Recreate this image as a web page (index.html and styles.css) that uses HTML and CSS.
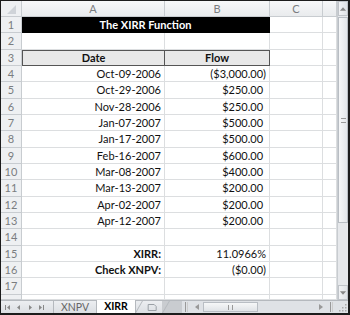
FILE: index.html
```html
<!DOCTYPE html>
<html>
<head>
<meta charset="utf-8">
<link rel="stylesheet" href="styles.css">
</head>
<body>
<div class="frame">
  <div class="main">
    <div class="sheet">
      <div class="corner"><svg width="20" height="15" viewBox="0 0 20 15"><polygon points="15,4 15,13 6,13" fill="#cfd3d8"/></svg></div>
      <div class="ch">A</div><div class="ch">B</div><div class="ch">C</div><div class="ch"></div>

      <div class="rh">1</div><div class="title">The XIRR Function</div><div class="c"></div><div class="c"></div>
      <div class="rh">2</div><div class="c"></div><div class="c"></div><div class="c"></div><div class="c"></div>
      <div class="rh">3</div><div class="hd hd-a">Date</div><div class="hd hd-b">Flow</div><div class="c"></div><div class="c"></div>
      <div class="rh">4</div><div class="c r">Oct-09-2006</div><div class="c r">($3,000.00)</div><div class="c"></div><div class="c"></div>
      <div class="rh">5</div><div class="c r">Oct-29-2006</div><div class="c r">$250.00<span class="p">)</span></div><div class="c"></div><div class="c"></div>
      <div class="rh">6</div><div class="c r">Nov-28-2006</div><div class="c r">$250.00<span class="p">)</span></div><div class="c"></div><div class="c"></div>
      <div class="rh">7</div><div class="c r">Jan-07-2007</div><div class="c r">$500.00<span class="p">)</span></div><div class="c"></div><div class="c"></div>
      <div class="rh">8</div><div class="c r">Jan-17-2007</div><div class="c r">$500.00<span class="p">)</span></div><div class="c"></div><div class="c"></div>
      <div class="rh">9</div><div class="c r">Feb-16-2007</div><div class="c r">$600.00<span class="p">)</span></div><div class="c"></div><div class="c"></div>
      <div class="rh">10</div><div class="c r">Mar-08-2007</div><div class="c r">$400.00<span class="p">)</span></div><div class="c"></div><div class="c"></div>
      <div class="rh">11</div><div class="c r">Mar-13-2007</div><div class="c r">$200.00<span class="p">)</span></div><div class="c"></div><div class="c"></div>
      <div class="rh">12</div><div class="c r">Apr-02-2007</div><div class="c r">$200.00<span class="p">)</span></div><div class="c"></div><div class="c"></div>
      <div class="rh">13</div><div class="c r">Apr-12-2007</div><div class="c r">$200.00<span class="p">)</span></div><div class="c"></div><div class="c"></div>
      <div class="rh">14</div><div class="c"></div><div class="c"></div><div class="c"></div><div class="c"></div>
      <div class="rh">15</div><div class="c r b">XIRR:</div><div class="c r">11.0966%</div><div class="c"></div><div class="c"></div>
      <div class="rh">16</div><div class="c r b">Check XNPV:</div><div class="c r">($0.00)</div><div class="c"></div><div class="c"></div>
      <div class="rh">17</div><div class="c"></div><div class="c"></div><div class="c"></div><div class="c"></div>
      <div class="rh">18</div><div class="c"></div><div class="c"></div><div class="c"></div><div class="c"></div>
    </div>
    <div class="vscroll">
      <div class="sbtn"><svg width="9" height="6" viewBox="0 0 9 6"><polygon points="1,5 8,5 4.5,1" fill="#888"/></svg></div>
      <div class="vthumb"><span class="grip"></span></div>
      <div class="vtrack"></div>
      <div class="sbtn"><svg width="9" height="6" viewBox="0 0 9 6"><polygon points="1,1 8,1 4.5,5" fill="#888"/></svg></div>
    </div>
  </div>
  <div class="tabbar">
    <div class="nav">
      <svg width="46" height="9" viewBox="0 0 46 9">
        <rect x="2" y="2" width="1" height="5" fill="#888"/><polygon points="7,2 7,7 4,4.5" fill="#888"/>
        <polygon points="17,2 17,7 14,4.5" fill="#888"/>
        <polygon points="26,2 26,7 29,4.5" fill="#888"/>
        <polygon points="36,2 36,7 39,4.5" fill="#888"/><rect x="40" y="2" width="1" height="5" fill="#888"/>
      </svg>
    </div>
    <div class="tab">XNPV</div>
    <div class="tab active">XIRR</div>
    <div class="tab newtab"><svg width="12" height="9" viewBox="0 0 12 9"><path d="M2 1.5h6l2 2v4H2z" fill="none" stroke="#9aa0a6"/></svg></div>
    <div class="hfill"></div>
    <div class="hscroll">
      <span class="split"></span>
      <svg class="arr" width="6" height="8" viewBox="0 0 6 8"><polygon points="5,1 5,7 1,4" fill="#999"/></svg>
      <div class="hthumb"><span class="hgrip"></span></div>
      <div class="htrack"></div>
      <svg class="arr" width="6" height="8" viewBox="0 0 6 8"><polygon points="1,1 1,7 5,4" fill="#999"/></svg>
      <span class="split"></span>
      <svg class="resize" width="10" height="10" viewBox="0 0 10 10"><g fill="#aaa"><rect x="7" y="2" width="1.5" height="1.5"/><rect x="4" y="5" width="1.5" height="1.5"/><rect x="7" y="5" width="1.5" height="1.5"/><rect x="1" y="8" width="1.5" height="1.5"/><rect x="4" y="8" width="1.5" height="1.5"/><rect x="7" y="8" width="1.5" height="1.5"/></g></svg>
    </div>
  </div>
</div>
</body>
</html>
```

FILE: styles.css
```css
* { box-sizing: border-box; }
body {
  margin: 0;
  background: #fff;
  font-family: Lato, "Open Sans", "Liberation Sans", sans-serif;
  font-size: 11px;
  color: #111;
}
.frame {
  width: 350px;
  height: 315px;
  border: 1px solid #1c1c1c;
  border-right-width: 2px;
  border-bottom-width: 2px;
  display: flex;
  flex-direction: column;
  overflow: hidden;
}
.main {
  display: flex;
  height: 299px;
}
.sheet {
  width: 336px;
  display: grid;
  grid-template-columns: 21px 143px 105px 53px 14px;
  grid-template-rows: 16px repeat(17, 16.33px) 1fr;
  overflow: hidden;
}
.sheet > div {
  border-right: 1px solid #dcdee0;
  border-bottom: 1px solid #dcdee0;
  white-space: nowrap;
  overflow: hidden;
}
.corner {
  background: #eef0f2;
  border-color: #c8ccd0 !important;
}
.corner svg { display: block; }
.ch {
  background: linear-gradient(#f7f8f9, #e9ebed);
  border-color: #c8ccd0 !important;
  color: #7a7d80;
  text-align: center;
  font-size: 11px;
  line-height: 15px;
}
.rh {
  background: #eef0f2;
  border-color: #c8ccd0 !important;
  color: #7a7d80;
  text-align: center;
  font-size: 11px;
  line-height: 15px;
}
.c {
  line-height: 15px;
  padding: 0 3px;
}
.r { text-align: right; }
.b { font-weight: bold; }
.p { visibility: hidden; }
.title {
  grid-column: span 2;
  background: #000;
  color: #fff;
  font-weight: bold;
  text-align: center;
  line-height: 15px;
  border-right-color: #000 !important;
  border-bottom-color: #000 !important;
}
.hd {
  background: #e8e8e8;
  font-weight: bold;
  text-align: center;
  line-height: 14px;
  border-top: 1px solid #555;
  border-bottom-color: #555 !important;
  border-right-color: #555 !important;
}
.hd-a { border-left: 1px solid #555; }
.vscroll {
  width: 11px;
  display: flex;
  flex-direction: column;
  background: #e6e8eb;
  border-left: 1px solid #c8ccd0;
}
.sbtn {
  height: 15px;
  display: flex;
  align-items: center;
  justify-content: center;
  background: linear-gradient(90deg, #f2f3f5, #dfe2e6);
  border: 1px solid #c0c4c9;
}
.vthumb {
  height: 206px;
  margin-top: 1px;
  background: linear-gradient(90deg, #f6f7f8, #e3e6ea);
  border: 1px solid #b9bec4;
  display: flex;
  align-items: center;
  justify-content: center;
}
.grip {
  width: 5px;
  height: 5px;
  border-top: 1px solid #999;
  border-bottom: 1px solid #999;
}
.vtrack { flex: 1; }
.tabbar {
  height: 13px;
  display: flex;
  align-items: stretch;
  background: linear-gradient(#eceef1, #dcdfe3);
  border-top: 1px solid #b5b9be;
  font-size: 10.5px;
}
.nav {
  width: 52px;
  display: flex;
  align-items: center;
  padding-left: 2px;
}
.nav svg { display: block; }
.tab {
  padding: 0 7px;
  line-height: 12px;
  color: #666;
  border-left: 1px solid #b5b9be;
  border-right: 1px solid #b5b9be;
  margin-right: -1px;
}
.tab.active {
  background: #fff;
  color: #000;
  font-weight: bold;
  margin-top: -1px;
  line-height: 13px;
}
.newtab {
  width: 28px;
  display: flex;
  align-items: center;
  justify-content: center;
  transform: skewX(-30deg);
  transform-origin: bottom left;
}
.newtab svg { transform: skewX(30deg); }
.hfill {
  width: 20px;
  background: #c9ccd0;
}
.hscroll {
  flex: 1;
  display: flex;
  align-items: center;
  background: #dfe2e6;
  gap: 0;
}
.split {
  width: 3px;
  height: 10px;
  border-left: 1px solid #999;
  border-right: 1px solid #ccc;
  margin: 0 3px;
}
.arr { margin: 0 3px; display: block; }
.hthumb {
  width: 55px;
  height: 10px;
  background: linear-gradient(#f6f7f8, #e0e3e7);
  border: 1px solid #b9bec4;
  display: flex;
  align-items: center;
  justify-content: center;
}
.hgrip {
  width: 5px;
  height: 5px;
  border-left: 1px solid #999;
  border-right: 1px solid #999;
}
.htrack { flex: 1; }
.resize { display: block; margin-left: 2px; }
```
